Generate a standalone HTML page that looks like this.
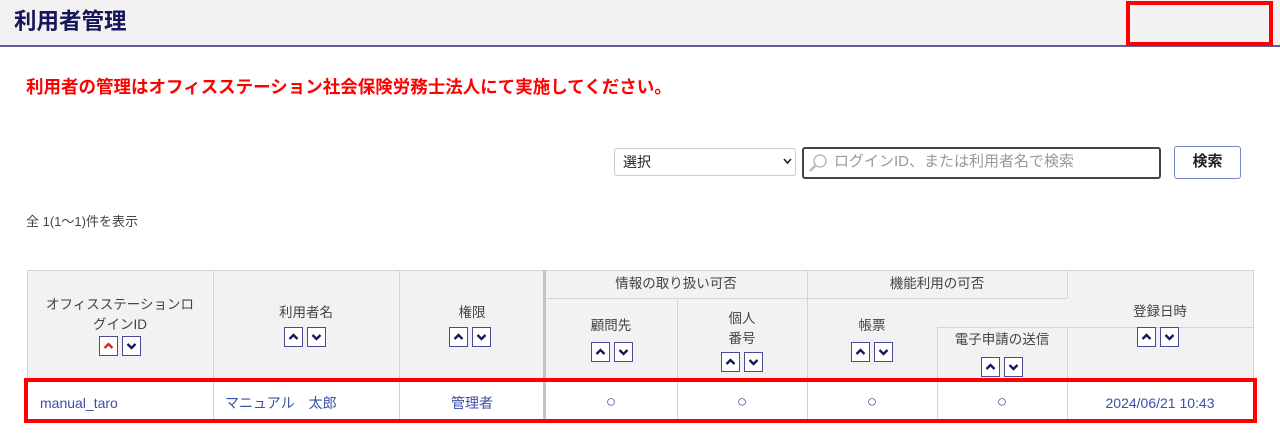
<!DOCTYPE html>
<html><head><meta charset="utf-8">
<style>
*{margin:0;padding:0;box-sizing:border-box}
body{width:1280px;height:444px;background:#fff;position:relative;overflow:hidden;font-family:"Liberation Sans","Noto Sans CJK JP",sans-serif;color:#333}
.a{position:absolute}
.hl{position:absolute;height:1px;background:#d4d4d4}
.vl{position:absolute;width:1px;background:#d4d4d4}
.t{position:absolute;font-size:13.5px;color:#444;text-align:center;line-height:20px}
.sb{position:absolute;width:19px;height:20px;border:1.5px solid #4a4a9a;background:#fff}
.sb svg{position:absolute;left:3px;top:4px}
.d{position:absolute;font-size:14px;color:#3a4fa8;line-height:20px;text-align:center}
.o{font-size:17px}
</style></head><body>
<div class="a" style="left:0;top:0;width:1280px;height:45px;background:#f2f2f2"></div>
<div class="a" style="left:0;top:45px;width:1280px;height:2px;background:#5f5f9f"></div>
<div class="a" style="left:14px;top:7px;font-size:22.5px;font-weight:bold;color:#16165a;line-height:30px">利用者管理</div>
<div class="a" style="left:1126px;top:1px;width:147px;height:45px;border:4px solid #f00"></div>
<div class="a" style="left:26px;top:76px;font-size:17.5px;font-weight:bold;color:#f00;line-height:22px">利用者の管理はオフィスステーション社会保険労務士法人にて実施してください。</div>

<div class="a" style="left:614px;top:148px;width:182px;height:28px;border:1px solid #ccc;border-radius:3px;background:#fff"></div>
<div class="a" style="left:623px;top:152px;font-size:14px;color:#222;line-height:20px">選択</div>
<svg class="a" style="left:783px;top:158px" width="9" height="7"><path d="M1 1L4.5 5L8 1" stroke="#222" stroke-width="1.6" fill="none"/></svg>
<div class="a" style="left:802px;top:147px;width:359px;height:32px;border:2px solid #444;border-radius:3px;background:#fff"></div>
<svg class="a" style="left:808px;top:153px" width="20" height="20"><circle cx="12" cy="8" r="6" stroke="#bbb" stroke-width="1.5" fill="none"/><path d="M8 12L2 18" stroke="#bbb" stroke-width="2.5"/></svg>
<div class="a" style="left:834px;top:152px;font-size:15px;color:#999;line-height:20px">ログインID、または利用者名で検索</div>
<div class="a" style="left:1174px;top:146px;width:67px;height:33px;border:1.5px solid #7a86c8;border-radius:3px;background:#fff;font-size:15px;font-weight:bold;color:#222;text-align:center;line-height:30px">検索</div>

<div class="a" style="left:26px;top:213px;font-size:13px;color:#444;line-height:18px">全 1(1～1)件を表示</div>

<div class="a" style="left:27px;top:270px;width:1226px;height:108px;background:#f2f2f2"></div>
<div class="hl" style="left:27px;top:270px;width:1226px"></div>
<div class="hl" style="left:545px;top:298px;width:522px"></div>
<div class="hl" style="left:937px;top:327px;width:316px"></div>
<div class="hl" style="left:27px;top:378px;width:1226px"></div>
<div class="hl" style="left:27px;top:421px;width:1226px"></div>
<div class="vl" style="left:27px;top:270px;height:151px"></div>
<div class="vl" style="left:213px;top:270px;height:151px"></div>
<div class="vl" style="left:399px;top:270px;height:151px"></div>
<div class="a" style="left:543px;top:270px;width:3px;height:151px;background:#c4c4c4"></div>
<div class="vl" style="left:677px;top:298px;height:123px"></div>
<div class="vl" style="left:807px;top:270px;height:151px"></div>
<div class="vl" style="left:937px;top:327px;height:94px"></div>
<div class="vl" style="left:1067px;top:270px;height:28px"></div>
<div class="vl" style="left:1067px;top:327px;height:94px"></div>
<div class="vl" style="left:1253px;top:270px;height:151px"></div>

<div class="t" style="left:27px;top:295px;width:186px">オフィスステーションロ<br>グインID</div>
<div class="t" style="left:213px;top:303px;width:186px">利用者名</div>
<div class="t" style="left:399px;top:303px;width:146px">権限</div>
<div class="t" style="left:545px;top:274px;width:262px">情報の取り扱い可否</div>
<div class="t" style="left:807px;top:274px;width:260px">機能利用の可否</div>
<div class="t" style="left:545px;top:316px;width:132px">顧問先</div>
<div class="t" style="left:677px;top:309px;width:130px">個人<br>番号</div>
<div class="t" style="left:807px;top:316px;width:130px">帳票</div>
<div class="t" style="left:937px;top:330px;width:130px">電子申請の送信</div>
<div class="t" style="left:1067px;top:302px;width:186px">登録日時</div>

<div id="btns"></div>
<script>
var pos=[[99,336,1],[284,327,0],[449,327,0],[591,342,0],[721,352,0],[851,342,0],[981,357,0],[1137,327,0]];
var h='';
pos.forEach(function(p){
 var c=p[2]?'#e02020':'#16165a';
 h+='<div class="sb" style="left:'+p[0]+'px;top:'+p[1]+'px"><svg width="11" height="10"><path d="M1.5 7L5.5 3L9.5 7" stroke="'+c+'" stroke-width="2.3" fill="none"/></svg></div>';
 h+='<div class="sb" style="left:'+(p[0]+23)+'px;top:'+p[1]+'px"><svg width="11" height="10"><path d="M1.5 3L5.5 7L9.5 3" stroke="#16165a" stroke-width="2.3" fill="none"/></svg></div>';
});
document.getElementById('btns').innerHTML=h;
</script>

<div class="d" style="left:40px;top:393px;text-align:left">manual_taro</div>
<div class="d" style="left:225px;top:393px;text-align:left">マニュアル　太郎</div>
<div class="d" style="left:399px;top:393px;width:146px">管理者</div>
<div class="d o" style="left:545px;top:392px;width:132px">○</div>
<div class="d o" style="left:677px;top:392px;width:130px">○</div>
<div class="d o" style="left:807px;top:392px;width:130px">○</div>
<div class="d o" style="left:937px;top:392px;width:130px">○</div>
<div class="d" style="left:1067px;top:393px;width:186px">2024/06/21 10:43</div>

<div class="a" style="left:24px;top:378px;width:1233px;height:45px;border:4px solid #f00"></div>
</body></html>
